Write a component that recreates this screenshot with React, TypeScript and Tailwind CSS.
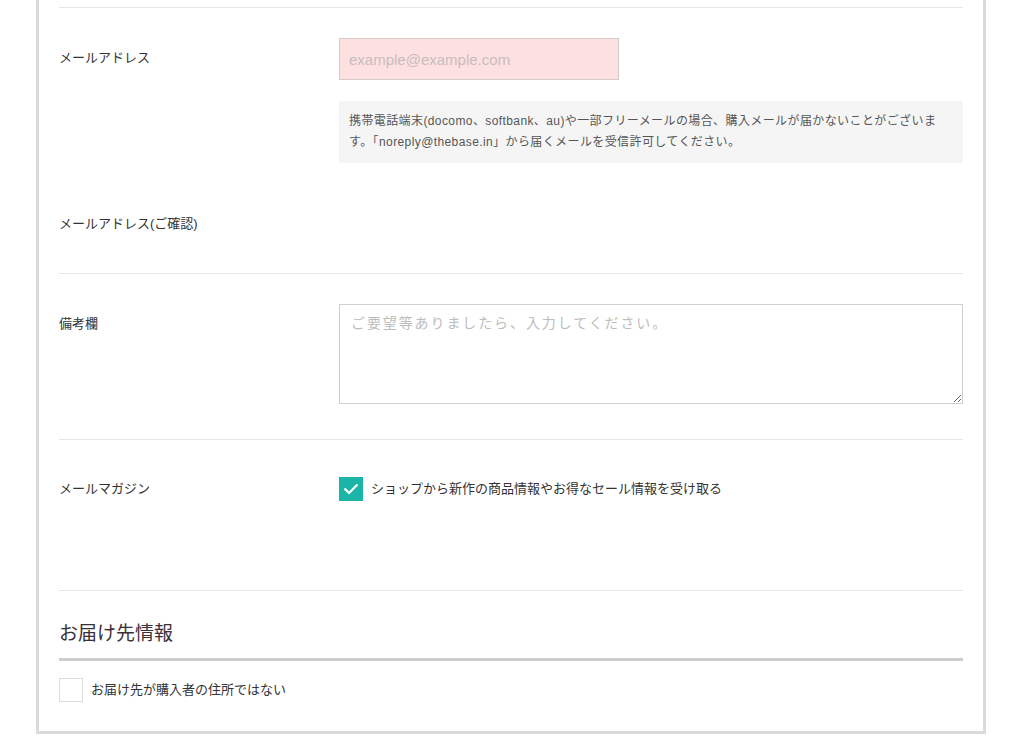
import { useState } from "react";

const jp = "font-['Liberation_Sans','Noto_Sans_CJK_JP',sans-serif]";

function Row({ label, children, className = "" }: { label: string; children?: React.ReactNode; className?: string }) {
  return (
    <div className={`flex ${className}`}>
      <div className="w-[280px] shrink-0 pt-[10px] text-[13px] leading-[20px] text-[#333]">{label}</div>
      <div className="flex-1">{children}</div>
    </div>
  );
}

export default function App() {
  const [magazine, setMagazine] = useState(true);
  const [otherAddress, setOtherAddress] = useState(false);

  return (
    <div className={`min-h-screen bg-white ${jp}`}>
      <div className="ml-[36px] mr-[32px] border-x-[3px] border-b-[3px] border-[#dadada] px-[20px]">
        <div className="h-[8px] border-b border-[#e6e6e6]" />

        <div className="border-b border-[#e6e6e6] pt-[30px] pb-[27px]">
          <Row label="メールアドレス">
            <input
              type="email"
              placeholder="example@example.com"
              className="h-[42px] w-[280px] border border-[#d6caca] bg-[#fde1e1] px-[9px] font-['Liberation_Sans',sans-serif] text-[15px] outline-none placeholder:text-[#c9bcbc]"
            />
            <div className="mt-[21px] bg-[#f5f5f5] px-[10px] py-[10px] text-[12px] leading-[21px] tracking-[0.4px] text-[#555]">
              携帯電話端末(docomo、softbank、au)や一部フリーメールの場合、購入メールが届かないことがございま
              <br />
              す。「noreply@thebase.in」から届くメールを受信許可してください。
            </div>
          </Row>
          <Row label="メールアドレス(ご確認)" className="mt-[41px]">
            <div className="h-[42px]" />
          </Row>
        </div>

        <div className="border-b border-[#e6e6e6] pt-[30px] pb-[35px]">
          <Row label="備考欄">
            <textarea
              placeholder="ご要望等ありましたら、入力してください。"
              className="block h-[100px] w-full border border-[#cfcfcf] px-[11px] py-[8px] text-[14px] tracking-[1.9px] outline-none placeholder:text-[#bdbdbd]"
            />
          </Row>
        </div>

        <div className="border-b border-[#e6e6e6] pt-[37px] pb-[89px]">
          <div className="flex">
            <div className="flex h-[24px] w-[280px] shrink-0 items-center text-[13px] text-[#333]">メールマガジン</div>
            <label className="flex cursor-pointer items-center gap-[8px]">
              <button
                type="button"
                onClick={() => setMagazine(!magazine)}
                className={`flex h-[24px] w-[24px] items-center justify-center ${magazine ? "bg-[#1bb5a7]" : "border border-[#ddd] bg-white"}`}
              >
                {magazine && (
                  <svg width="16" height="12" viewBox="0 0 16 12" fill="none">
                    <path d="M1.5 5.5 L6 10 L14.5 1.5" stroke="white" strokeWidth="2.2" />
                  </svg>
                )}
              </button>
              <span className="text-[13px] text-[#333]">ショップから新作の商品情報やお得なセール情報を受け取る</span>
            </label>
          </div>
        </div>

        <div className="pt-[31px] pb-[29px]">
          <h2 className="border-b-[3px] border-[#cccccc] pb-[12px] text-[19px] leading-[24px] font-normal text-[#3a3038]">お届け先情報</h2>
          <label className="mt-[17px] flex cursor-pointer items-center gap-[8px]">
            <button
              type="button"
              onClick={() => setOtherAddress(!otherAddress)}
              className={`flex h-[24px] w-[24px] items-center justify-center ${otherAddress ? "bg-[#1bb5a7]" : "border border-[#dddddd] bg-white"}`}
            >
              {otherAddress && (
                <svg width="16" height="12" viewBox="0 0 16 12" fill="none">
                  <path d="M1.5 5.5 L6 10 L14.5 1.5" stroke="white" strokeWidth="2.2" />
                </svg>
              )}
            </button>
            <span className="text-[13px] text-[#333]">お届け先が購入者の住所ではない</span>
          </label>
        </div>
      </div>
    </div>
  );
}
